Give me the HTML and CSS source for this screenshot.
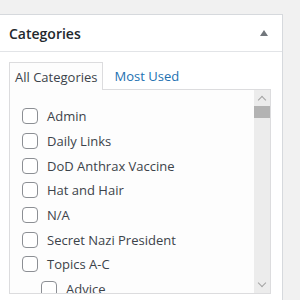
FILE: index.html
```html
<!DOCTYPE html>
<html lang="en">
<head>
    <meta charset="UTF-8">
    <title>Categories</title>
    <link rel="stylesheet" href="styles.css">
</head>
<body>
  <div class="postbox">
    <div class="postbox-header">
      <h2>Categories</h2>
      <span class="toggle-arrow"></span>
    </div>
    <div class="inside">
      <ul class="tabs">
        <li class="tab active">All Categories</li>
        <li class="tab">Most Used</li>
      </ul>
      <div class="panel">
        <ul class="checklist">
          <li><span class="check"></span>Admin</li>
          <li><span class="check"></span>Daily Links</li>
          <li><span class="check"></span>DoD Anthrax Vaccine</li>
          <li><span class="check"></span>Hat and Hair</li>
          <li><span class="check"></span>N/A</li>
          <li><span class="check"></span>Secret Nazi President</li>
          <li><span class="check"></span>Topics A-C</li>
          <li class="child"><span class="check"></span>Advice</li>
        </ul>
        <div class="scrollbar">
          <span class="arrow up"></span>
          <span class="thumb"></span>
          <span class="track"></span>
          <span class="arrow down"></span>
        </div>
      </div>
    </div>
  </div>
</body>
</html>
```

FILE: styles.css
```css
body {
    margin: 0;
    background: #f1f1f1;
    font-family: 'Open Sans', 'Noto Sans', sans-serif;
    color: #3c434a;
    height: 300px;
    overflow: hidden;
}
.postbox {
    margin: 14px 0 0 -1px;
    width: 282px;
    background: #fff;
    border: 1px solid #d6d9dd;
    height: 320px;
}
.postbox-header {
    height: 36px;
    border-bottom: 1px solid #e2e4e7;
    display: flex;
    align-items: center;
    justify-content: space-between;
    padding: 0 14px 0 9px;
}
h2 {
    margin: 0;
    font-size: 14px;
    font-weight: 600;
    color: #23282d;
}
.toggle-arrow {
    width: 0;
    height: 0;
    border-left: 4px solid transparent;
    border-right: 4px solid transparent;
    border-bottom: 6px solid #72777c;
    margin-top: -1px;
}
.inside {
    padding: 9px 11px 0 9px;
}
.tabs {
    list-style: none;
    margin: 0;
    padding: 0;
    display: flex;
    height: 28px;
}
.tab {
    padding: 0 5px;
    font-size: 13px;
    line-height: 28px;
    color: #2271b1;
    border: 1px solid transparent;
    border-bottom: none;
}
.tab.active {
    color: #3c434a;
    border-color: #dcdcde;
    background: #fdfdfd;
    margin-right: 5px;
    position: relative;
    top: 1px;
}
.panel {
    display: flex;
    height: 203px;
    border: 1px solid #dcdcde;
    background: #fdfdfd;
}
.checklist {
    list-style: none;
    flex: 1;
    margin: 0;
    padding: 14px 0 0 12px;
    overflow: hidden;
}
.checklist li {
    display: flex;
    align-items: center;
    height: 24.7px;
    font-size: 13px;
    color: #3c434a;
    white-space: nowrap;
}
.checklist li.child {
    padding-left: 19px;
}
.check {
    width: 14px;
    height: 14px;
    border: 1px solid #8c8f94;
    border-radius: 4px;
    background: #fff;
    margin-right: 9px;
    flex: none;
}
.scrollbar {
    width: 16px;
    background: #ececec;
    display: flex;
    flex-direction: column;
    align-items: center;
}
.arrow {
    width: 5px;
    height: 5px;
    border-left: 1px solid #a3a3a3;
    border-top: 1px solid #a3a3a3;
    flex: none;
}
.arrow.up {
    transform: rotate(45deg);
    margin: 7px 0 3px;
}
.arrow.down {
    transform: rotate(225deg);
    margin: 3px 0 7px;
}
.thumb {
    width: 16px;
    height: 12px;
    background: #b3b3b3;
    flex: none;
}
.track {
    flex: 1;
}
```
